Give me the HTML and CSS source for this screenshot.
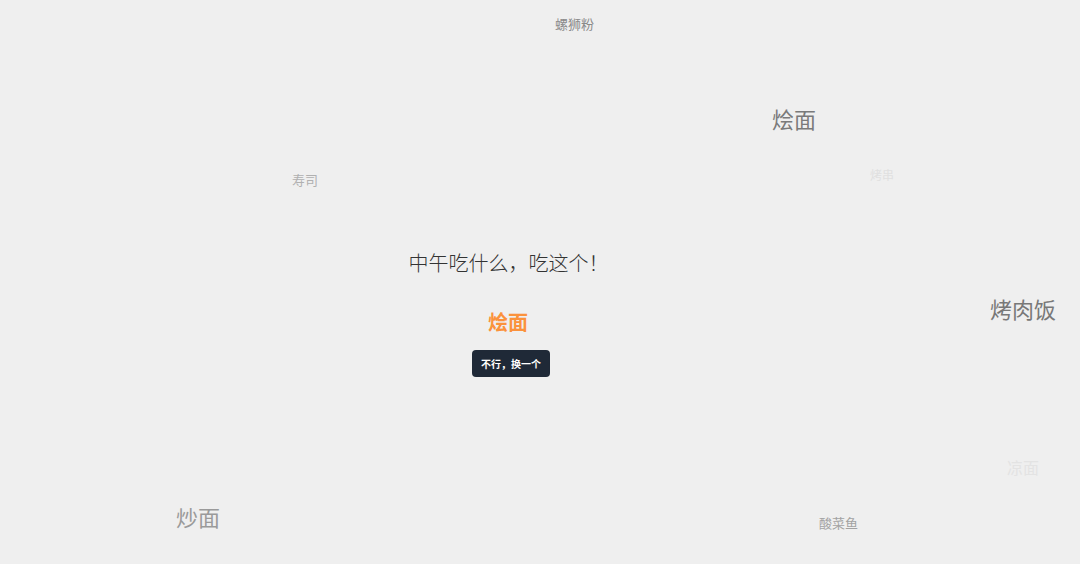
FILE: index.html
```html
<!DOCTYPE html>
<html lang="zh-CN">
<head>
<meta charset="utf-8">
<title>中午吃什么</title>
<link rel="stylesheet" href="styles.css">
</head>
<body>
<div class="stage">
  <div class="cloud">
    <span class="word w1">螺狮粉</span>
    <span class="word w2">烩面</span>
    <span class="word w3">寿司</span>
    <span class="word w4">烤串</span>
    <span class="word w5">烤肉饭</span>
    <span class="word w6">凉面</span>
    <span class="word w7">炒面</span>
    <span class="word w8">酸菜鱼</span>
  </div>
  <main class="picker">
    <h1 class="title">中午吃什么，吃这个！</h1>
    <div class="answer">烩面</div>
    <button class="btn" type="button">不行，换一个</button>
  </main>
</div>
</body>
</html>
```

FILE: styles.css
```css
html, body {
  margin: 0;
  padding: 0;
  background: #efefef;
}
body {
  font-family: "Noto Sans CJK SC", "Noto Sans", sans-serif;
  width: 1080px;
  height: 564px;
  overflow: hidden;
}
.stage {
  position: relative;
  width: 1080px;
  height: 564px;
}
.cloud {
  position: absolute;
  inset: 0;
  pointer-events: none;
}
.word {
  position: absolute;
  line-height: 1;
  white-space: nowrap;
}
.w1 { left: 555px; top: 17px; font-size: 13px; color: #8a8a8a; }
.w2 { left: 772px; top: 107px; font-size: 22px; color: #7a7a7a; }
.w3 { left: 292px; top: 173px; font-size: 13px; color: #b0b0b0; }
.w4 { left: 870px; top: 169px; font-size: 12px; color: #e0e0e0; }
.w5 { left: 990px; top: 297px; font-size: 22px; color: #787878; }
.w6 { left: 1007px; top: 459px; font-size: 16px; color: #e3e3e3; }
.w7 { left: 176px; top: 505px; font-size: 22px; color: #9a9a9a; }
.w8 { left: 819px; top: 516px; font-size: 13px; color: #a2a2a2; }

.picker {
  width: 1020px;
  padding-top: 249px;
  display: flex;
  flex-direction: column;
  align-items: center;
}
.title {
  margin: 0 3px 0 0;
  font-size: 20px;
  line-height: 28px;
  font-weight: 300;
  color: #333;
}
.answer {
  margin: 31px 4px 0 0;
  font-size: 20px;
  line-height: 28px;
  font-weight: 700;
  color: #fb923c;
}
.btn {
  margin-top: 14px;
  height: 27px;
  padding: 0 9px;
  border: 0;
  border-radius: 4px;
  background: #1f2937;
  color: #fff;
  font-family: inherit;
  font-size: 10px;
  font-weight: 700;
  line-height: 27px;
  margin-left: 2px;
}
```
